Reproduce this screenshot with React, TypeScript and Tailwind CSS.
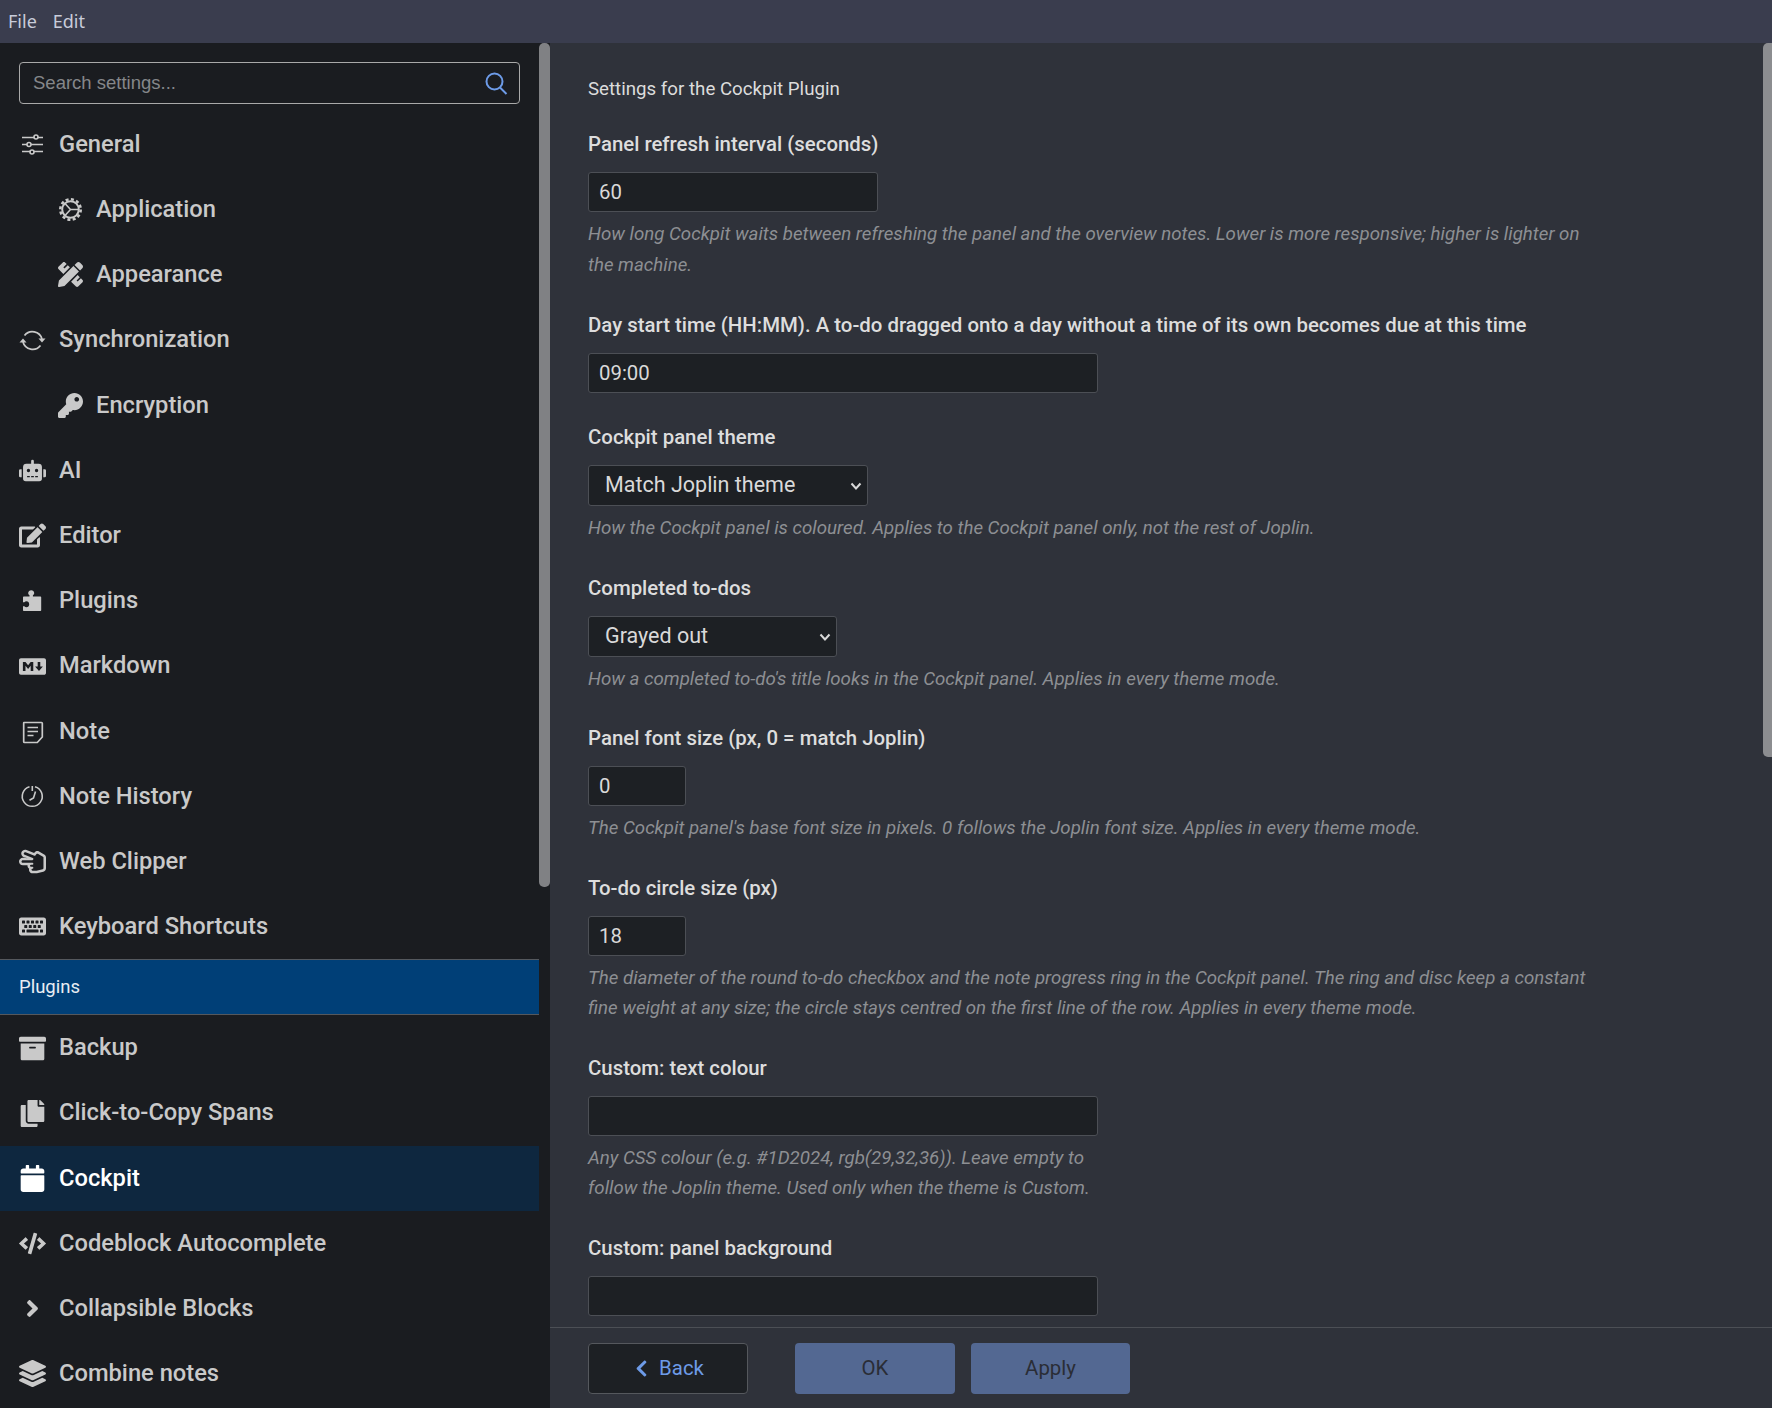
import React from "react";
import {
  FaRobot, FaEdit, FaMarkdown, FaKeyboard, FaArchive, FaCopy, FaCalendar, FaCode, FaAngleRight, FaLayerGroup,
  FaPencilRuler, FaKey, FaRegHandScissors, FaChevronLeft,
} from "react-icons/fa";

const Sliders = () => (
  <svg width="27" height="27" viewBox="0 0 27 27" fill="none" stroke="currentColor" strokeWidth="1.6">
    <path d="M3 6.5h21M3 13.5h21M3 20.5h21" />
    <circle cx="17" cy="6" r="2" fill="#1a1c20" />
    <circle cx="10" cy="13.5" r="2" fill="#1a1c20" />
    <circle cx="13" cy="21" r="2" fill="#1a1c20" />
  </svg>
);
const Gear = () => (
  <svg width="25" height="25" viewBox="0 0 25 25" fill="none" stroke="currentColor">
    <circle cx="12.5" cy="12.5" r="10.2" strokeWidth="2.6" strokeDasharray="3 2.35" />
    <circle cx="12.5" cy="12.5" r="8.3" strokeWidth="2" />
    <path d="M12.5 12.5L7 6.5M12.5 12.5L7 18.5M12.5 12.5H21" strokeWidth="1.6" />
  </svg>
);
const Sync = () => (
  <svg width="27" height="27" viewBox="0 0 27 27" fill="none" stroke="currentColor" strokeWidth="1.7">
    <path d="M5.5 8.5A10 10 0 0 1 23 12" />
    <path d="M21.5 18.5A10 10 0 0 1 4 15" />
    <path d="M19.5 11.5h7l-3.5 4z" fill="currentColor" stroke="none" />
    <path d="M0.5 15.5h7l-3.5-4z" fill="currentColor" stroke="none" />
  </svg>
);
const Puzzle = () => (
  <svg width="27" height="27" viewBox="0 0 27 27" fill="currentColor">
    <path d="M5 9.5h5.5V8.2c-1-.6-1.3-1.2-1.3-2.2 0-1.6 1.4-2.8 3-2.8s3 1.2 3 2.8c0 1-.4 1.6-1.3 2.2v1.3h7.3c.6 0 1 .4 1 1v12.4c0 .6-.4 1-1 1H5c-.6 0-1-.4-1-1v-3.700h1.300c.7.700 1.300 1 2.200 1 1.500 0 2.700-1.300 2.700-3s-1.200-3-2.700-3c-.9 0-1.500.3-2.200 1H4v-4.700c0-.6.400-1 1-1z" />
  </svg>
);
const NoteIcon = () => (
  <svg width="27" height="27" viewBox="0 0 27 27" fill="none" stroke="currentColor" strokeWidth="1.7">
    <path d="M5 4.500h17.500c.4 0 .8.4.8.800v13.700l-5 5.500H5.500c-.4 0-.8-.4-.8-.8V5c0-.3.100-.5.300-.5z" />
    <path d="M8.500 9.500h10.500M8.500 13.500h10.500M8.500 17.500h6" />
  </svg>
);
const History = () => (
  <svg width="27" height="27" viewBox="0 0 27 27" fill="none" stroke="currentColor" strokeWidth="1.6">
    <path d="M10.500 3.700A10 10 0 1 0 16 3.700" />
    <path d="M13.300 3v5" />
    <path d="M16.500 8.500l-2 6.500-4 2.300" />
  </svg>
);

type Item = { label: string; icon: React.ReactNode; sub?: boolean };
const top: Item[] = [
  { label: "General", icon: <Sliders /> },
  { label: "Application", icon: <Gear />, sub: true },
  { label: "Appearance", icon: <FaPencilRuler size={25} />, sub: true },
  { label: "Synchronization", icon: <Sync /> },
  { label: "Encryption", icon: <FaKey size={25} />, sub: true },
  { label: "AI", icon: <FaRobot size={27} /> },
  { label: "Editor", icon: <FaEdit size={27} /> },
  { label: "Plugins", icon: <Puzzle /> },
  { label: "Markdown", icon: <FaMarkdown size={27} /> },
  { label: "Note", icon: <NoteIcon /> },
  { label: "Note History", icon: <History /> },
  { label: "Web Clipper", icon: <FaRegHandScissors size={27} /> },
  { label: "Keyboard Shortcuts", icon: <FaKeyboard size={27} /> },
];
const plugins: Item[] = [
  { label: "Backup", icon: <FaArchive size={27} /> },
  { label: "Click-to-Copy Spans", icon: <FaCopy size={27} /> },
  { label: "Cockpit", icon: <FaCalendar size={27} /> },
  { label: "Codeblock Autocomplete", icon: <FaCode size={27} /> },
  { label: "Collapsible Blocks", icon: <FaAngleRight size={27} /> },
  { label: "Combine notes", icon: <FaLayerGroup size={27} /> },
];

function Row({ item, active }: { item: Item; active?: boolean }) {
  return (
    <div
      className={`flex h-[65.2px] shrink-0 items-center gap-[13px] text-[23.700px] font-medium ${item.sub ? "pl-[58px]" : "pl-[19px]"} ${
        active ? "bg-[#0e273f] text-white" : "text-[#c9c9c9]"
      }`}
    >
      {item.icon}
      <span>{item.label}</span>
    </div>
  );
}

const Label = ({ children, className = "" }: { children: React.ReactNode; className?: string }) => (
  <div className={`text-[20.400px] font-medium leading-[30px] text-[#dddddd] ${className}`}>{children}</div>
);
const Desc = ({ children, className = "" }: { children: React.ReactNode; className?: string }) => (
  <p className={`mt-[7px] text-[18.700px] italic leading-[30.500px] text-[#8d8f93] ${className}`}>{children}</p>
);
const Field = ({ value, width }: { value: string; width: string }) => (
  <input
    readOnly
    value={value}
    className={`mt-[13px] block h-[40px] rounded-[3px] border border-[#4c4f55] bg-[#1d2024] pl-[10px] text-[20.400px] text-[#d9d9d9] outline-none ${width}`}
  />
);
const Choice = ({ value, width }: { value: string; width: string }) => (
  <div className={`relative mt-[13px] h-[41px] ${width}`}>
    <select
      defaultValue={value}
      className="h-full w-full appearance-none rounded-[3px] border border-[#4c4f55] bg-[#1d2024] pl-[16px] text-[21.500px] text-[#d9d9d9] outline-none"
    >
      <option>{value}</option>
    </select>
    <svg className="absolute right-[5px] top-[14px]" width="14" height="14" viewBox="0 0 14 14" fill="none" stroke="#d9d9d9" strokeWidth="2">
      <path d="M2.500 4.500L7 9.500l4.500-5" />
    </svg>
  </div>
);

export default function App() {
  return (
    <div className="flex h-[1408px] w-[1772px] flex-col overflow-hidden bg-[#2f323a] font-['Roboto',sans-serif]">
      <div className="flex h-[43px] shrink-0 items-center gap-[16px] bg-[#3a3d4e] pl-[8px] font-['Noto_Sans',sans-serif] text-[18px] text-[#c8ccda]">
        <span>File</span>
        <span>Edit</span>
      </div>
      <div className="flex min-h-0 flex-1">
        <aside className="relative flex w-[550px] shrink-0 flex-col overflow-hidden bg-[#1a1c20]">
          <div className="absolute right-0 top-0 h-[844px] w-[11px] rounded-[5px] bg-[#808184]" />
          <div className="w-[539px] shrink-0 pt-[19px]">
            <div className="mx-[19px] mb-[8px] flex h-[42px] w-[501px] items-center justify-between rounded-[4px] border border-[#a9a9a9] pl-[13px] pr-[11px] font-['Liberation_Sans',sans-serif] text-[18.500px] text-[#85878a]">
              <span>Search settings...</span>
              <svg width="24" height="24" viewBox="0 0 24 24" fill="none" stroke="#6d9be8" strokeWidth="2">
                <circle cx="10.500" cy="10.500" r="8" />
                <path d="M16 16.500l6.500 6.500" />
              </svg>
            </div>
          </div>
          <div className="flex w-[539px] flex-col">
            {top.map((i) => (
              <Row key={i.label + (i.sub ? "s" : "")} item={i} />
            ))}
            <div className="flex h-[56px] shrink-0 items-center border-y border-[#55585d] bg-[#003f77] pl-[19px] text-[18.500px] text-[#e8edf3]">
              Plugins
            </div>
            {plugins.map((i) => (
              <Row key={i.label} item={i} active={i.label === "Cockpit"} />
            ))}
          </div>
        </aside>
        <main className="relative flex min-w-0 flex-1 flex-col">
          <div className="absolute right-0 top-0 h-[714px] w-[9px] rounded-tl-[5px] rounded-bl-[5px] bg-[#8c8d90]" />
          <div className="min-h-0 flex-1 overflow-hidden pl-[38px] pt-[33px]">
            <div className="text-[18.700px] leading-[26px] text-[#dcdcdc]">Settings for the Cockpit Plugin</div>
            <Label className="mt-[27px]">Panel refresh interval (seconds)</Label>
            <Field value="60" width="w-[290px]" />
            <Desc className="w-[1010px]">
              How long Cockpit waits between refreshing the panel and the overview notes. Lower is more responsive; higher is lighter on the machine.
            </Desc>
            <Label className="mt-[30px]">Day start time (HH:MM). A to-do dragged onto a day without a time of its own becomes due at this time</Label>
            <Field value="09:00" width="w-[510px]" />
            <Label className="mt-[29px]">Cockpit panel theme</Label>
            <Choice value="Match Joplin theme" width="w-[280px]" />
            <Desc>How the Cockpit panel is coloured. Applies to the Cockpit panel only, not the rest of Joplin.</Desc>
            <Label className="mt-[29px]">Completed to-dos</Label>
            <Choice value="Grayed out" width="w-[249px]" />
            <Desc>How a completed to-do's title looks in the Cockpit panel. Applies in every theme mode.</Desc>
            <Label className="mt-[29px]">Panel font size (px, 0 = match Joplin)</Label>
            <Field value="0" width="w-[98px]" />
            <Desc>The Cockpit panel's base font size in pixels. 0 follows the Joplin font size. Applies in every theme mode.</Desc>
            <Label className="mt-[29px]">To-do circle size (px)</Label>
            <Field value="18" width="w-[98px]" />
            <Desc className="w-[1010px]">
              The diameter of the round to-do checkbox and the note progress ring in the Cockpit panel. The ring and disc keep a constant fine weight at any size; the circle stays centred on the first line of the row. Applies in every theme mode.
            </Desc>
            <Label className="mt-[29px]">Custom: text colour</Label>
            <Field value="" width="w-[510px]" />
            <Desc className="w-[510px]">
              Any CSS colour (e.g. #1D2024, rgb(29,32,36)). Leave empty to follow the Joplin theme. Used only when the theme is Custom.
            </Desc>
            <Label className="mt-[29px]">Custom: panel background</Label>
            <Field value="" width="w-[510px]" />
          </div>
          <div className="flex h-[81px] shrink-0 items-center border-t border-[#4c4f55] pl-[38px] text-[20.400px]">
            <button className="flex h-[51px] w-[160px] items-center justify-center gap-[8px] rounded-[4px] border border-[#55585d] bg-[#1d2024] text-[#6d9be8]">
              <FaChevronLeft size={19} />
              Back
            </button>
            <button className="ml-[47px] h-[51px] w-[160px] rounded-[4px] bg-[#536892] text-[#2a2d36]">OK</button>
            <button className="ml-[16px] h-[51px] w-[159px] rounded-[4px] bg-[#536892] text-[#2a2d36]">Apply</button>
          </div>
        </main>
      </div>
    </div>
  );
}
